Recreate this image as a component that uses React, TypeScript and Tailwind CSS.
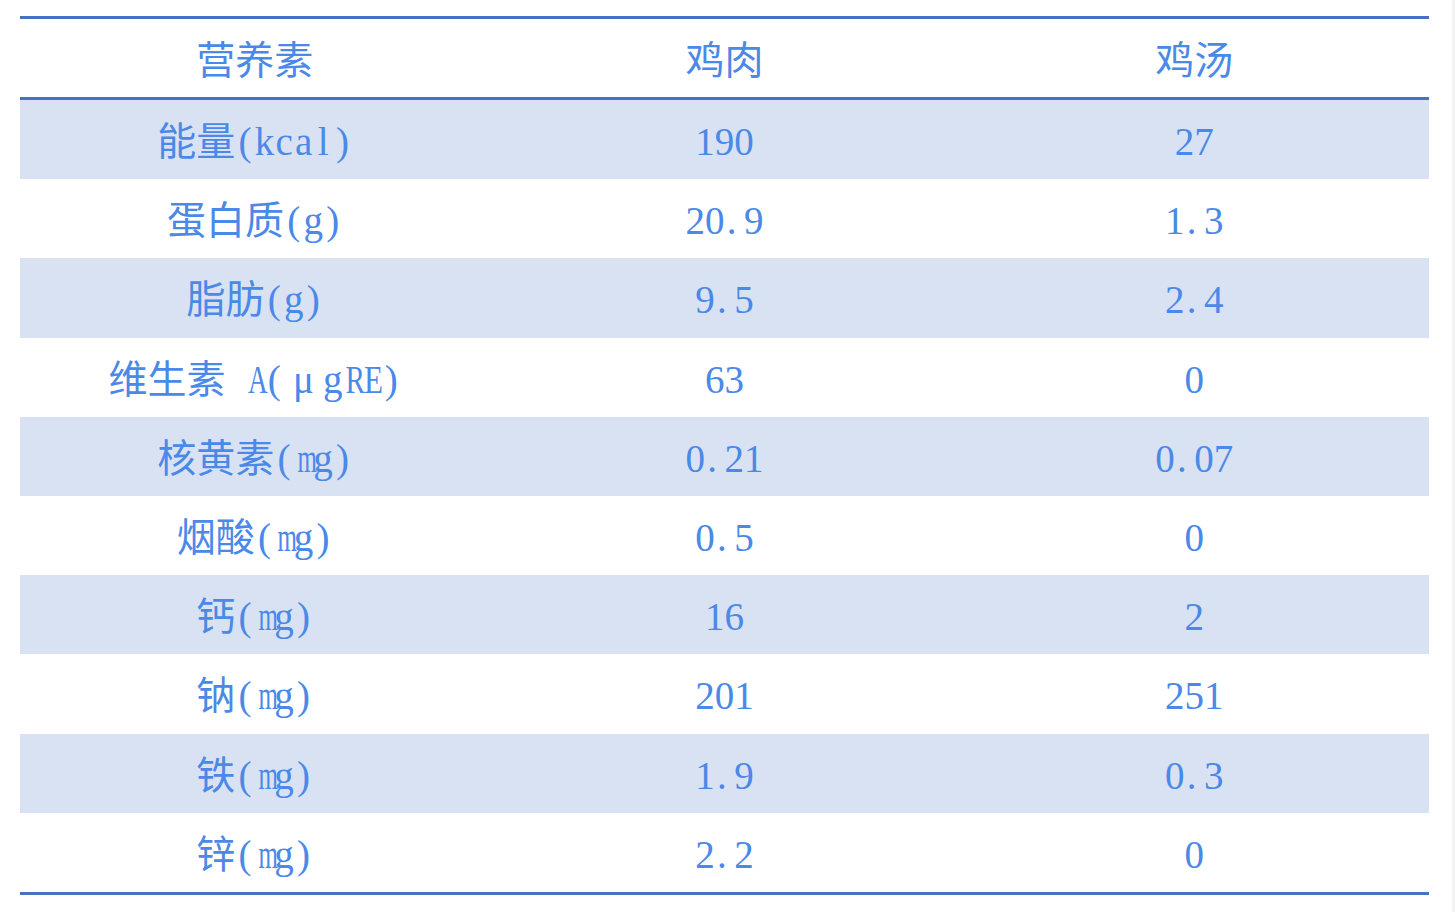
import React from "react";

const rows: [string, string, string][] = [
  ["能量(kcal)", "190", "27"],
  ["蛋白质(g)", "20.9", "1.3"],
  ["脂肪(g)", "9.5", "2.4"],
  ["维生素 A(μgRE)", "63", "0"],
  ["核黄素(mg)", "0.21", "0.07"],
  ["烟酸(mg)", "0.5", "0"],
  ["钙(mg)", "16", "2"],
  ["钠(mg)", "201", "251"],
  ["铁(mg)", "1.9", "0.3"],
  ["锌(mg)", "2.2", "0"],
];

const narrowClass: Record<string, string> = {
  m: "inline-block w-[0.5em] text-center scale-x-[0.64]",
  A: "inline-block w-[0.5em] text-center scale-x-[0.7]",
  R: "inline-block w-[0.5em] text-center scale-x-[0.75]",
  E: "inline-block w-[0.5em] text-center scale-x-[0.8]",
  ".": "inline-block w-[0.5em] text-left pl-[0.06em]",
};

function isWide(ch: string) {
  const c = ch.charCodeAt(0);
  return c >= 0x2e80 || ch === "μ";
}

function T({ s }: { s: string }) {
  return (
    <span className="inline-flex whitespace-pre">
      {Array.from(s).map((ch, i) =>
        isWide(ch) ? (
          <span key={i} className="inline-block w-[1em] text-center">
            {ch}
          </span>
        ) : (
          <span key={i} className={narrowClass[ch] ?? "inline-block w-[0.5em] text-center"}>
            {ch}
          </span>
        )
      )}
    </span>
  );
}

export default function App() {
  return (
    <div className="flex min-h-[912px] w-full bg-white">
      <div className="flex-1 pl-[20px] pr-[23px] pt-[16px]">
        <div
          className="w-full border-t-[3px] border-b-[3px] border-[#4672c0] text-[39px] leading-none text-[#4a89e8]"
          style={{ fontFamily: '"Liberation Serif", "Noto Sans CJK SC", serif' }}
        >
          <div className="grid h-[81px] grid-cols-3 items-center border-b-[3px] border-[#4672c0] pt-[4px] text-center">
            <div><T s="营养素" /></div>
            <div><T s="鸡肉" /></div>
            <div><T s="鸡汤" /></div>
          </div>
          {rows.map((r, i) => (
            <div
              key={i}
              className={
                i % 2 === 0
                  ? "grid h-[79.2px] grid-cols-3 items-center bg-[#d9e2f3] pt-[4px] text-center"
                  : "grid h-[79.2px] grid-cols-3 items-center bg-white pt-[4px] text-center"
              }
            >
              <div><T s={r[0]} /></div>
              <div><T s={r[1]} /></div>
              <div><T s={r[2]} /></div>
            </div>
          ))}
        </div>
      </div>
      <div className="w-[3px] bg-[#f2f2f2]" />
    </div>
  );
}
